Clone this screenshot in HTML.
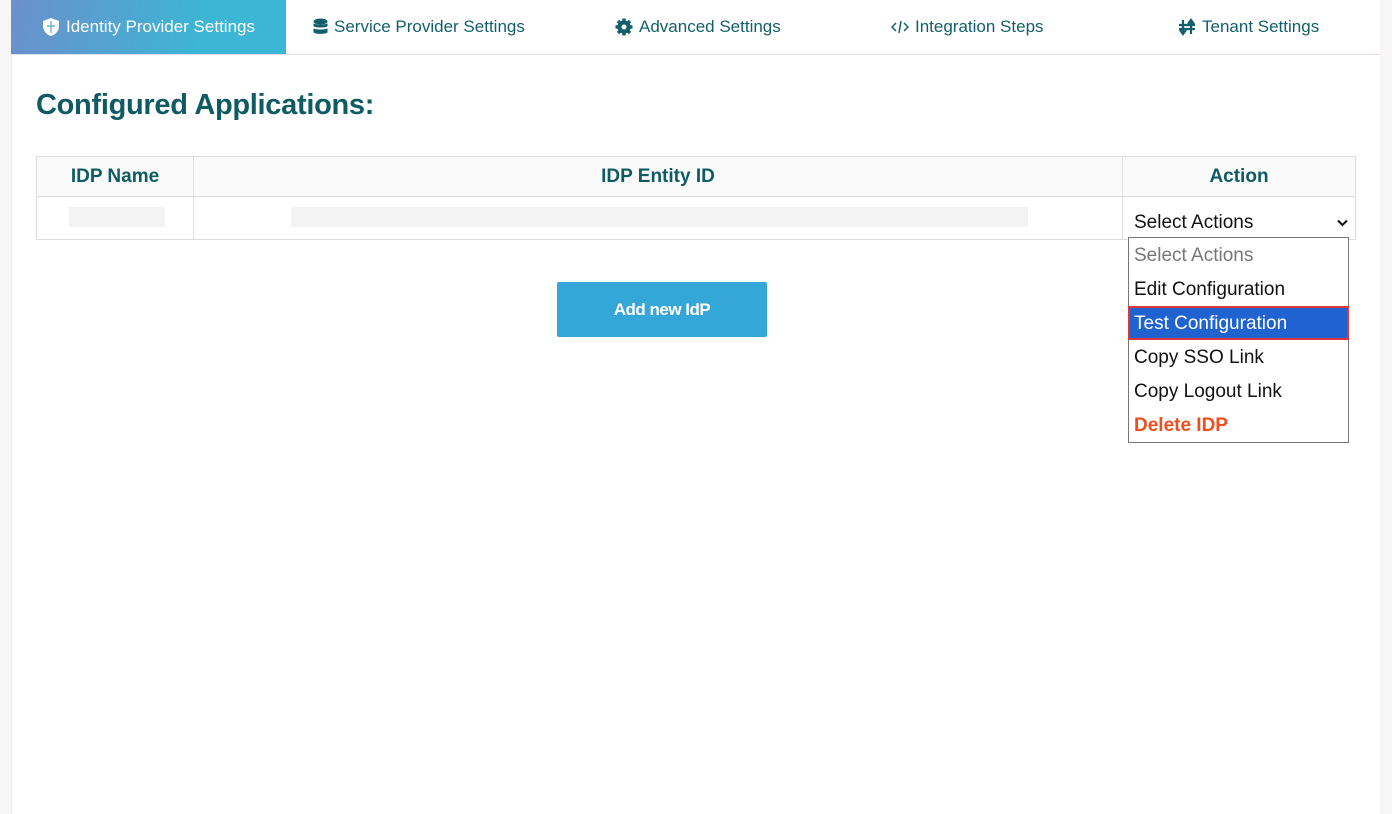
<!DOCTYPE html>
<html><head><meta charset="utf-8"><style>
*{box-sizing:border-box;margin:0;padding:0}
body{width:1392px;height:814px;background:#f7f5f5;font-family:"Liberation Sans",sans-serif;position:relative;overflow:hidden}
.tabs{position:absolute;left:11px;top:0;width:1369px;height:54px;background:#fff}
.tab{position:absolute;top:0;height:54px;display:flex;align-items:center;font-size:17px;color:#125f6b;white-space:nowrap}
.tab svg{margin-right:6px}
.active{left:0;width:275px;background:linear-gradient(100deg,#6c8fcc,#3cb6d4 70%);color:#fff;justify-content:center}
.card{position:absolute;left:11px;top:54px;width:1369px;height:760px;background:#fff;border-top:1px solid #e2e2e2;border-left:1px solid #eee}
h1{position:absolute;left:24px;top:34px;font-size:29px;color:#0e5b63;font-weight:bold;letter-spacing:-0.3px}
table{position:absolute;left:24px;top:101px;width:1320px;border-collapse:collapse}
td,th{border:1px solid #ddd}
th{height:40px;font-size:19px;color:#0e5b63;background:#fafafa}
td{height:43px;position:relative}
.blur{position:absolute;background:#f3f3f3;height:20px;top:10px}
.btn{position:absolute;left:545px;top:227px;width:210px;height:55px;background:#35a6d8;color:#fff;font-weight:bold;font-size:17px;display:flex;align-items:center;justify-content:center;border-radius:2px;letter-spacing:-0.5px}
.sel{position:absolute;left:1122px;top:157px;font-size:19px;color:#111;width:215px}
.dd{position:absolute;left:1128px;top:237px;width:221px;height:206px;border:1px solid #777;background:#fff;font-size:19px}
.dd div{height:34px;line-height:36px;padding-left:5px;color:#111}
</style></head><body>
<div class="tabs">
 <div class="tab active"><svg width="18" height="20" viewBox="0 0 18 20"><path d="M9 1 L17 4 V9 C17 14 13 18 9 19 C5 18 1 14 1 9 V4 Z" fill="#fff"/><path d="M9 4 V16 M5 9 H13" stroke="#6fb5d3" stroke-width="1.4"/></svg>Identity Provider Settings</div>
 <div class="tab" style="left:302px"><svg width="15" height="18" viewBox="0 0 15 18"><ellipse cx="7.5" cy="3.5" rx="7" ry="3" fill="#125f6b"/><path d="M0.5 5 V8 C0.5 10 14.5 10 14.5 8 V5 C14.5 7 0.5 7 0.5 5Z M0.5 10 V14 C0.5 16.5 14.5 16.5 14.5 14 V10 C14.5 12 0.5 12 0.5 10Z" fill="#125f6b"/></svg>Service Provider Settings</div>
 <div class="tab" style="left:604px"><svg width="18" height="18" viewBox="0 0 18 18"><circle cx="9" cy="9" r="6.5" fill="#125f6b"/><g stroke="#125f6b" stroke-width="3.5"><path d="M9 0.5V17.5M0.5 9H17.5M3 3L15 15M15 3L3 15"/></g><circle cx="9" cy="9" r="2.5" fill="#fff"/></svg>Advanced Settings</div>
 <div class="tab" style="left:880px"><svg width="18" height="14" viewBox="0 0 18 14"><path d="M5 3L1 7L5 11M13 3L17 7L13 11M10 1L8 13" stroke="#125f6b" stroke-width="1.5" fill="none"/></svg>Integration Steps</div>
 <div class="tab" style="left:1167px"><svg width="18" height="18" viewBox="0 0 18 18"><path d="M5 2V16M2 12L5 16L8 12M13 16V2M10 6L13 2L16 6M1 7H17M1 11H17" stroke="#125f6b" stroke-width="2.2" fill="none"/></svg>Tenant Settings</div>
</div>
<div class="card">
 <h1>Configured Applications:</h1>
 <table>
  <tr><th style="width:157px">IDP Name</th><th style="width:929px">IDP Entity ID</th><th>Action</th></tr>
  <tr><td><div class="blur" style="left:32px;width:96px"></div></td><td><div class="blur" style="left:97px;width:737px"></div></td><td></td></tr>
 </table>
 <div class="sel">Select Actions<svg style="position:absolute;left:203px;top:7px" width="11" height="8" viewBox="0 0 11 8"><path d="M1 1.5L5.5 6L10 1.5" stroke="#111" stroke-width="2" fill="none"/></svg></div>
 <div class="btn">Add new IdP</div>
</div>
<div class="dd">
 <div style="color:#777">Select Actions</div>
 <div>Edit Configuration</div>
 <div style="background:#1e63d0;color:#fff;outline:2px solid #e0363a;outline-offset:-2px;margin:0 -1px;padding-left:6px">Test Configuration</div>
 <div>Copy SSO Link</div>
 <div>Copy Logout Link</div>
 <div style="color:#f04e1e;font-weight:bold">Delete IDP</div>
</div>
</body></html>
